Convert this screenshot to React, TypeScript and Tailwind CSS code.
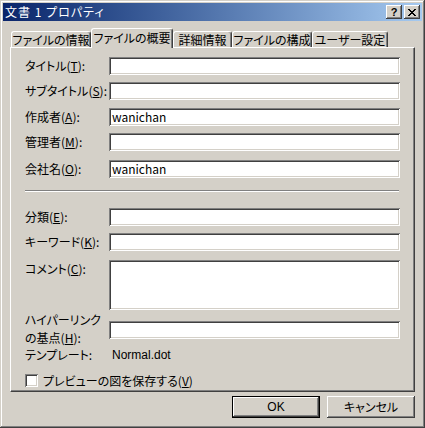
import React from 'react';

const raised =
    'shadow-[inset_-1px_-1px_#404040,inset_1px_1px_#ffffff,inset_-2px_-2px_#808080,inset_2px_2px_#d4d0c8]';
const sunken =
    'shadow-[inset_1px_1px_#808080,inset_-1px_-1px_#ffffff,inset_2px_2px_#404040,inset_-2px_-2px_#d4d0c8]';

function Label({ text, k }: { text: string; k: string }) {
    return (
        <span>
            {text}(<u>{k}</u>):
        </span>
    );
}

function Field({ label, k, value, className = '' }: { label: string; k: string; value?: string; className?: string }) {
    return (
        <div className={`flex items-center h-[18px] ${className}`}>
            <div className="w-[84px] shrink-0">
                <Label text={label} k={k} />
            </div>
            <div className={`w-[291px] h-[18px] bg-white ${sunken} flex items-center pl-[3px]`}>
                {value}
            </div>
        </div>
    );
}

const tabs = [
    { label: 'ファイルの情報', w: 'w-[80px]' },
    { label: 'ファイルの概要', w: 'w-[82px]', active: true },
    { label: '詳細情報', w: 'w-[59px]' },
    { label: 'ファイルの構成', w: 'w-[80px]' },
    { label: 'ユーザー設定', w: 'w-[76px]' },
];

export default function App() {
    return (
        <div
            className={`w-[425px] h-[428px] bg-[#d4d0c8] p-[3px] flex flex-col text-[12px] leading-none text-black font-['Noto_Sans_CJK_JP','Noto_Sans',sans-serif] [font-feature-settings:'palt'] shadow-[inset_-1px_-1px_#404040,inset_1px_1px_#d4d0c8,inset_-2px_-2px_#808080,inset_2px_2px_#ffffff]`}
        >
            {/* Title bar */}
            <div className="h-[18px] flex items-center justify-between pl-[2px] pr-[2px] bg-gradient-to-r from-[#0a246a] to-[#a6caf0]">
                <span className="text-white text-[12px] tracking-[1px]">文書 1 プロパティ</span>
                <div className="flex gap-[2px]">
                    <div className={`w-[16px] h-[14px] bg-[#d4d0c8] ${raised} flex items-center justify-center font-bold text-[11px] font-['Liberation_Sans',sans-serif]`}>
                        ?
                    </div>
                    <div className={`w-[16px] h-[14px] bg-[#d4d0c8] ${raised} flex items-center justify-center`}>
                        <svg width="8" height="7" viewBox="0 0 8 7" shapeRendering="crispEdges">
                            <path d="M0 0h2v1h-2zM6 0h2v1h-2zM1 1h2v1h-2zM5 1h2v1h-2zM2 2h4v1h-4zM3 3h2v1h-2zM2 4h4v1h-4zM1 5h2v1h-2zM5 5h2v1h-2zM0 6h2v1h-2zM6 6h2v1h-2z" fill="#000" />
                        </svg>
                    </div>
                </div>
            </div>

            <div className="flex flex-col px-[7px] pt-[7px]">
                {/* Tabs */}
                <div className="flex items-end h-[19px] pl-[1px]">
                    {tabs.map((t) =>
                        t.active ? (
                            <div
                                key={t.label}
                                className={`${t.w} h-[20px] -mb-px relative z-10 bg-[#d4d0c8] border-l border-t border-white rounded-t-[3px] shadow-[inset_-1px_0_#808080] border-r border-r-[#404040] flex items-center justify-center pb-[2px]`}
                            >
                                {t.label}
                            </div>
                        ) : (
                            <div
                                key={t.label}
                                className={`${t.w} h-[16px] bg-[#d4d0c8] border-l border-t border-white rounded-t-[3px] shadow-[inset_-1px_0_#808080] border-r border-r-[#404040] flex items-center justify-center`}
                            >
                                {t.label}
                            </div>
                        )
                    )}
                </div>

                {/* Panel */}
                <div className="h-[345px] border-l border-t border-white border-r border-b border-r-[#404040] border-b-[#404040] shadow-[inset_-1px_-1px_#808080] flex flex-col pl-[14px] pt-[9px]">
                    <Field label="タイトル" k="T" />
                    <Field label="サブタイトル" k="S" className="mt-[7px]" />
                    <Field label="作成者" k="A" value="wanichan" className="mt-[8px]" />
                    <Field label="管理者" k="M" className="mt-[7px]" />
                    <Field label="会社名" k="O" value="wanichan" className="mt-[9px]" />

                    <div className="mt-[12px] w-[374px] h-[2px] border-t border-t-[#808080] border-b border-b-white" />

                    <Field label="分類" k="E" className="mt-[16px]" />
                    <Field label="キーワード" k="K" className="mt-[7px]" />
                    <div className="flex items-start mt-[9px]">
                        <div className="w-[84px] shrink-0 pt-[3px]">
                            <Label text="コメント" k="C" />
                        </div>
                        <div className={`w-[291px] h-[50px] bg-white ${sunken}`} />
                    </div>
                    <div className="flex items-center mt-[11px] h-[18px]">
                        <div className="w-[84px] shrink-0 leading-[18px] -mt-[2px]">
                            ハイパーリンク
                            <br />
                            の基点(<u>H</u>):
                        </div>
                        <div className={`w-[291px] h-[18px] bg-white ${sunken}`} />
                    </div>
                    <div className="flex items-center mt-[9px] h-[14px]">
                        <div className="w-[87px] shrink-0">テンプレート:</div>
                        <span className="font-['Liberation_Sans',sans-serif]">Normal.dot</span>
                    </div>
                    <div className="flex items-center mt-[12px] h-[13px]">
                        <div className={`w-[13px] h-[13px] bg-white ${sunken}`} />
                        <span className="ml-[5px]">
                            プレビューの図を保存する(<u>V</u>)
                        </span>
                    </div>
                </div>

                {/* Buttons */}
                <div className="flex justify-end gap-[7px] mt-[4px]">
                    <div className="w-[88px] h-[22px] border border-black bg-[#d4d0c8] shadow-[inset_-1px_-1px_#404040,inset_1px_1px_#ffffff,inset_-2px_-2px_#808080] flex items-center justify-center font-['Liberation_Sans',sans-serif]">
                        OK
                    </div>
                    <div className={`w-[88px] h-[22px] bg-[#d4d0c8] ${raised} flex items-center justify-center`}>
                        キャンセル
                    </div>
                </div>
            </div>
        </div>
    );
}
